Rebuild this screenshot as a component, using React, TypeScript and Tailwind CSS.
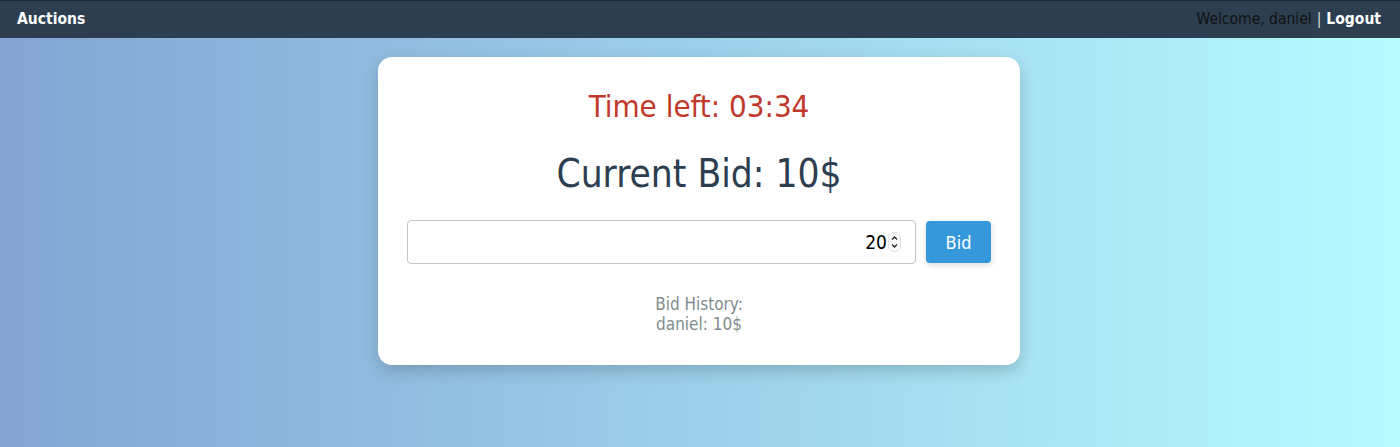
import React from "react";

export default function App() {
  const font = { fontFamily: '"DejaVu Sans Condensed", "DejaVu Sans", Verdana, sans-serif' };
  return (
    <div
      className="w-[1400px] h-[447px] flex flex-col bg-[linear-gradient(to_right,#83a4d4,#b6fbff)]"
      style={font}
    >
      <nav className="h-[38px] bg-[#2c3e50] border-t border-[#1b2633] flex items-center justify-between px-[17px] pr-[19px]">
        <span className="text-white font-bold text-[15.5px]">Auctions</span>
        <div className="text-[15.5px] flex items-center">
          <span className="text-[#111]">Welcome, daniel</span>
          <span className="text-[#ddd] mx-[5px]">|</span>
          <span className="text-white font-bold">Logout</span>
        </div>
      </nav>
      <div className="flex justify-center pt-[19px] pr-[2px]">
        <div className="w-[642px] bg-white rounded-[14px] shadow-[0_6px_16px_rgba(0,0,0,0.18)] px-[29px] pt-[30px] pb-[31px] flex flex-col items-center">
          <div className="text-[#c0392b] text-[31px] leading-[38px]">Time left: 03:34</div>
          <div className="text-[#2c3e50] text-[38.5px] leading-[48px] mt-[25px]">Current Bid: 10$</div>
          <div className="w-full flex items-center gap-[10px] mt-[22px]">
            <div className="flex-1 h-[44px] border border-[#c4c4c4] rounded-[4px] flex items-center justify-end pr-[14px] text-[19px] text-black">
              <span>20</span>
              <svg width="13" height="20" viewBox="0 0 13 20" className="ml-[1px]">
                <rect x="0.5" y="0.5" width="12" height="19" rx="5.5" fill="#fafafa" stroke="#e0e0e0" />
                <path d="M4 7.5 L6.5 5 L9 7.5" fill="none" stroke="#222" strokeWidth="1.3" />
                <path d="M4 12.5 L6.5 15 L9 12.5" fill="none" stroke="#222" strokeWidth="1.3" />
              </svg>
            </div>
            <button className="w-[65px] h-[42px] bg-[#3498db] rounded-[4px] text-white text-[18px] shadow-[0_2px_6px_rgba(0,0,0,0.15)]">
              Bid
            </button>
          </div>
          <div className="text-[#7f8c8d] text-[17px] leading-[20px] mt-[30px] text-center">
            <div>Bid History:</div>
            <div>daniel: 10$</div>
          </div>
        </div>
      </div>
    </div>
  );
}
